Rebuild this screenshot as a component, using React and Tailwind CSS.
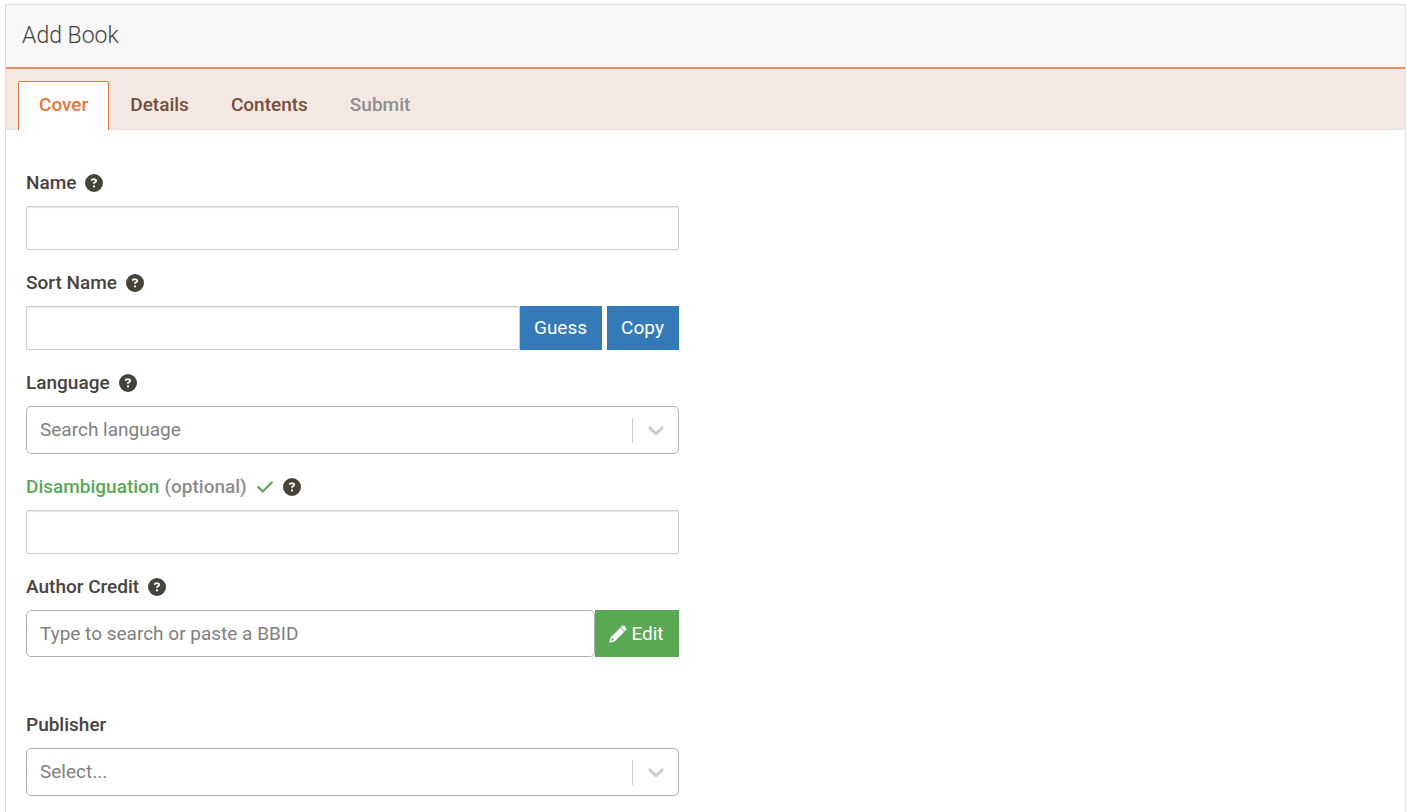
import { useState } from 'react';
import { FaCircleQuestion, FaCheck } from 'react-icons/fa6';

const TABS = [
  { id: 'cover', label: 'Cover' },
  { id: 'details', label: 'Details' },
  { id: 'contents', label: 'Contents' },
  { id: 'submit', label: 'Submit', disabled: true },
];

const LANGUAGES = ['English', 'French', 'German', 'Spanish'];

const inputClass =
  'h-11 w-full min-w-0 rounded-xs border border-[#cccccc] bg-white px-3 shadow-[inset_0_1px_1px_rgba(0,0,0,0.08)] focus:outline-none focus:border-[#eb743b]';

function HelpIcon() {
  return <FaCircleQuestion className="size-[18px] text-[#46433a]" aria-hidden="true" />;
}

function PencilIcon() {
  return (
    <svg viewBox="0 0 18 18" className="size-[18px]" fill="currentColor" aria-hidden="true">
      <path d="M12.9 1.1a1.9 1.9 0 0 1 2.7 0l1.3 1.3a1.9 1.9 0 0 1 0 2.7l-1.3 1.3-4-4z" />
      <path fillRule="evenodd" d="M11.1 2.9l4 4-9.3 9.3L.9 17.7a.5.5 0 0 1-.6-.6l1.5-4.9zM2.9 13.3l-.8 2.6 2.6-.8-.3-1.5z" />
    </svg>
  );
}

function Field({ id, label, help, children }) {
  return (
    <div>
      <div className="mb-2.5 flex h-[26px] items-center gap-[9px]">
        <label htmlFor={id} className="font-medium">{label}</label>
        {help && <HelpIcon />}
      </div>
      {children}
    </div>
  );
}

function SelectBox({ id, placeholder, options = [] }) {
  return (
    <div className="relative">
      <select
        id={id}
        defaultValue=""
        className="h-12 w-full appearance-none rounded-[5px] border border-[#b3b3b3] bg-white pr-14 pl-[13px] text-[#808080] focus:outline-none focus:border-[#eb743b]"
      >
        <option value="" disabled>{placeholder}</option>
        {options.map(o => (
          <option key={o} value={o}>{o}</option>
        ))}
      </select>
      <div className="pointer-events-none absolute inset-y-0 right-0 flex items-center text-[#cccccc]">
        <span className="h-[25px] w-px bg-[#cccccc]" />
        <svg viewBox="0 0 20 20" className="mx-2.5 size-[26px]" fill="currentColor" aria-hidden="true">
          <path d="M4.516 7.548c0.436-0.446 1.043-0.481 1.576 0l3.908 3.747 3.908-3.747c0.533-0.481 1.141-0.446 1.574 0 0.436 0.445 0.408 1.197 0 1.615-0.406 0.418-4.695 4.502-4.695 4.502-0.217 0.223-0.502 0.335-0.787 0.335s-0.57-0.112-0.789-0.335c0 0-4.287-4.084-4.695-4.502s-0.436-1.17 0-1.615z" />
        </svg>
      </div>
    </div>
  );
}

export default function App() {
  const [active, setActive] = useState('cover');

  return (
    <div className="min-h-screen bg-white pt-1 pl-[5px] font-['Roboto',sans-serif] text-[19px] leading-6 text-[#46433f]">
      <main className="min-h-[calc(100vh-4px)] border border-b-0 border-[#dddddd]">
        <header className="border-b-2 border-[#eb8f61] bg-[#f7f7f7] px-4 py-[15px]">
          <h1 className="text-[23px] leading-8 font-light">Add Book</h1>
        </header>

        <div role="tablist" className="flex border-b border-[#e8e4e2] bg-[#f4e8e2] px-3 pt-3">
          {TABS.map(t => (
            <button
              key={t.id}
              type="button"
              role="tab"
              aria-selected={active === t.id}
              disabled={t.disabled}
              onClick={() => setActive(t.id)}
              className={
                active === t.id
                  ? '-mb-px h-[49px] rounded-t-xs border border-b-0 border-[#eb743b] bg-white px-5 pb-0.5 font-medium text-[#eb743b]'
                  : 'h-12 border border-transparent px-5 font-medium text-[#754e37] disabled:text-[#8f8f8f]'
              }
            >
              {t.label}
            </button>
          ))}
        </div>

        <form className="px-5 pt-10 pb-4" onSubmit={e => e.preventDefault()}>
          <div className="flex w-full flex-col gap-5 lg:w-1/2 lg:pr-[27px]">
            <Field id="name" label="Name" help>
              <input id="name" type="text" className={inputClass} />
            </Field>

            <Field id="sort-name" label="Sort Name" help>
              <div className="flex">
                <input id="sort-name" type="text" className={inputClass} />
                <button type="button" className="mr-[5px] h-11 w-[82px] shrink-0 bg-[#337ab7] text-white">Guess</button>
                <button type="button" className="h-11 w-[72px] shrink-0 bg-[#337ab7] text-white">Copy</button>
              </div>
            </Field>

            <Field id="language" label="Language" help>
              <SelectBox id="language" placeholder="Search language" options={LANGUAGES} />
            </Field>

            <Field
              id="disambiguation"
              help
              label={
                <span className="flex items-center text-[#5aa854]">
                  Disambiguation
                  <span className="ml-[5px] text-[#8c8c8c]">(optional)</span>
                  <FaCheck className="ml-[9px] size-[18px]" aria-hidden="true" />
                </span>
              }
            >
              <input id="disambiguation" type="text" className={inputClass} />
            </Field>

            <Field id="author-credit" label="Author Credit" help>
              <div className="flex">
                <input
                  id="author-credit"
                  type="text"
                  placeholder="Type to search or paste a BBID"
                  className="h-[47px] w-full min-w-0 rounded-[5px] border border-[#b3b3b3] bg-white px-[13px] placeholder:text-[#808080] focus:outline-none focus:border-[#eb743b]"
                />
                <button type="button" className="flex h-[47px] w-[84px] shrink-0 items-center justify-center gap-1 bg-[#5aa854] text-white">
                  <PencilIcon />
                  Edit
                </button>
              </div>
            </Field>

            <div className="mt-[35px]">
              <Field id="publisher" label="Publisher">
                <SelectBox id="publisher" placeholder="Select..." />
              </Field>
            </div>
          </div>
        </form>
      </main>
    </div>
  );
}
